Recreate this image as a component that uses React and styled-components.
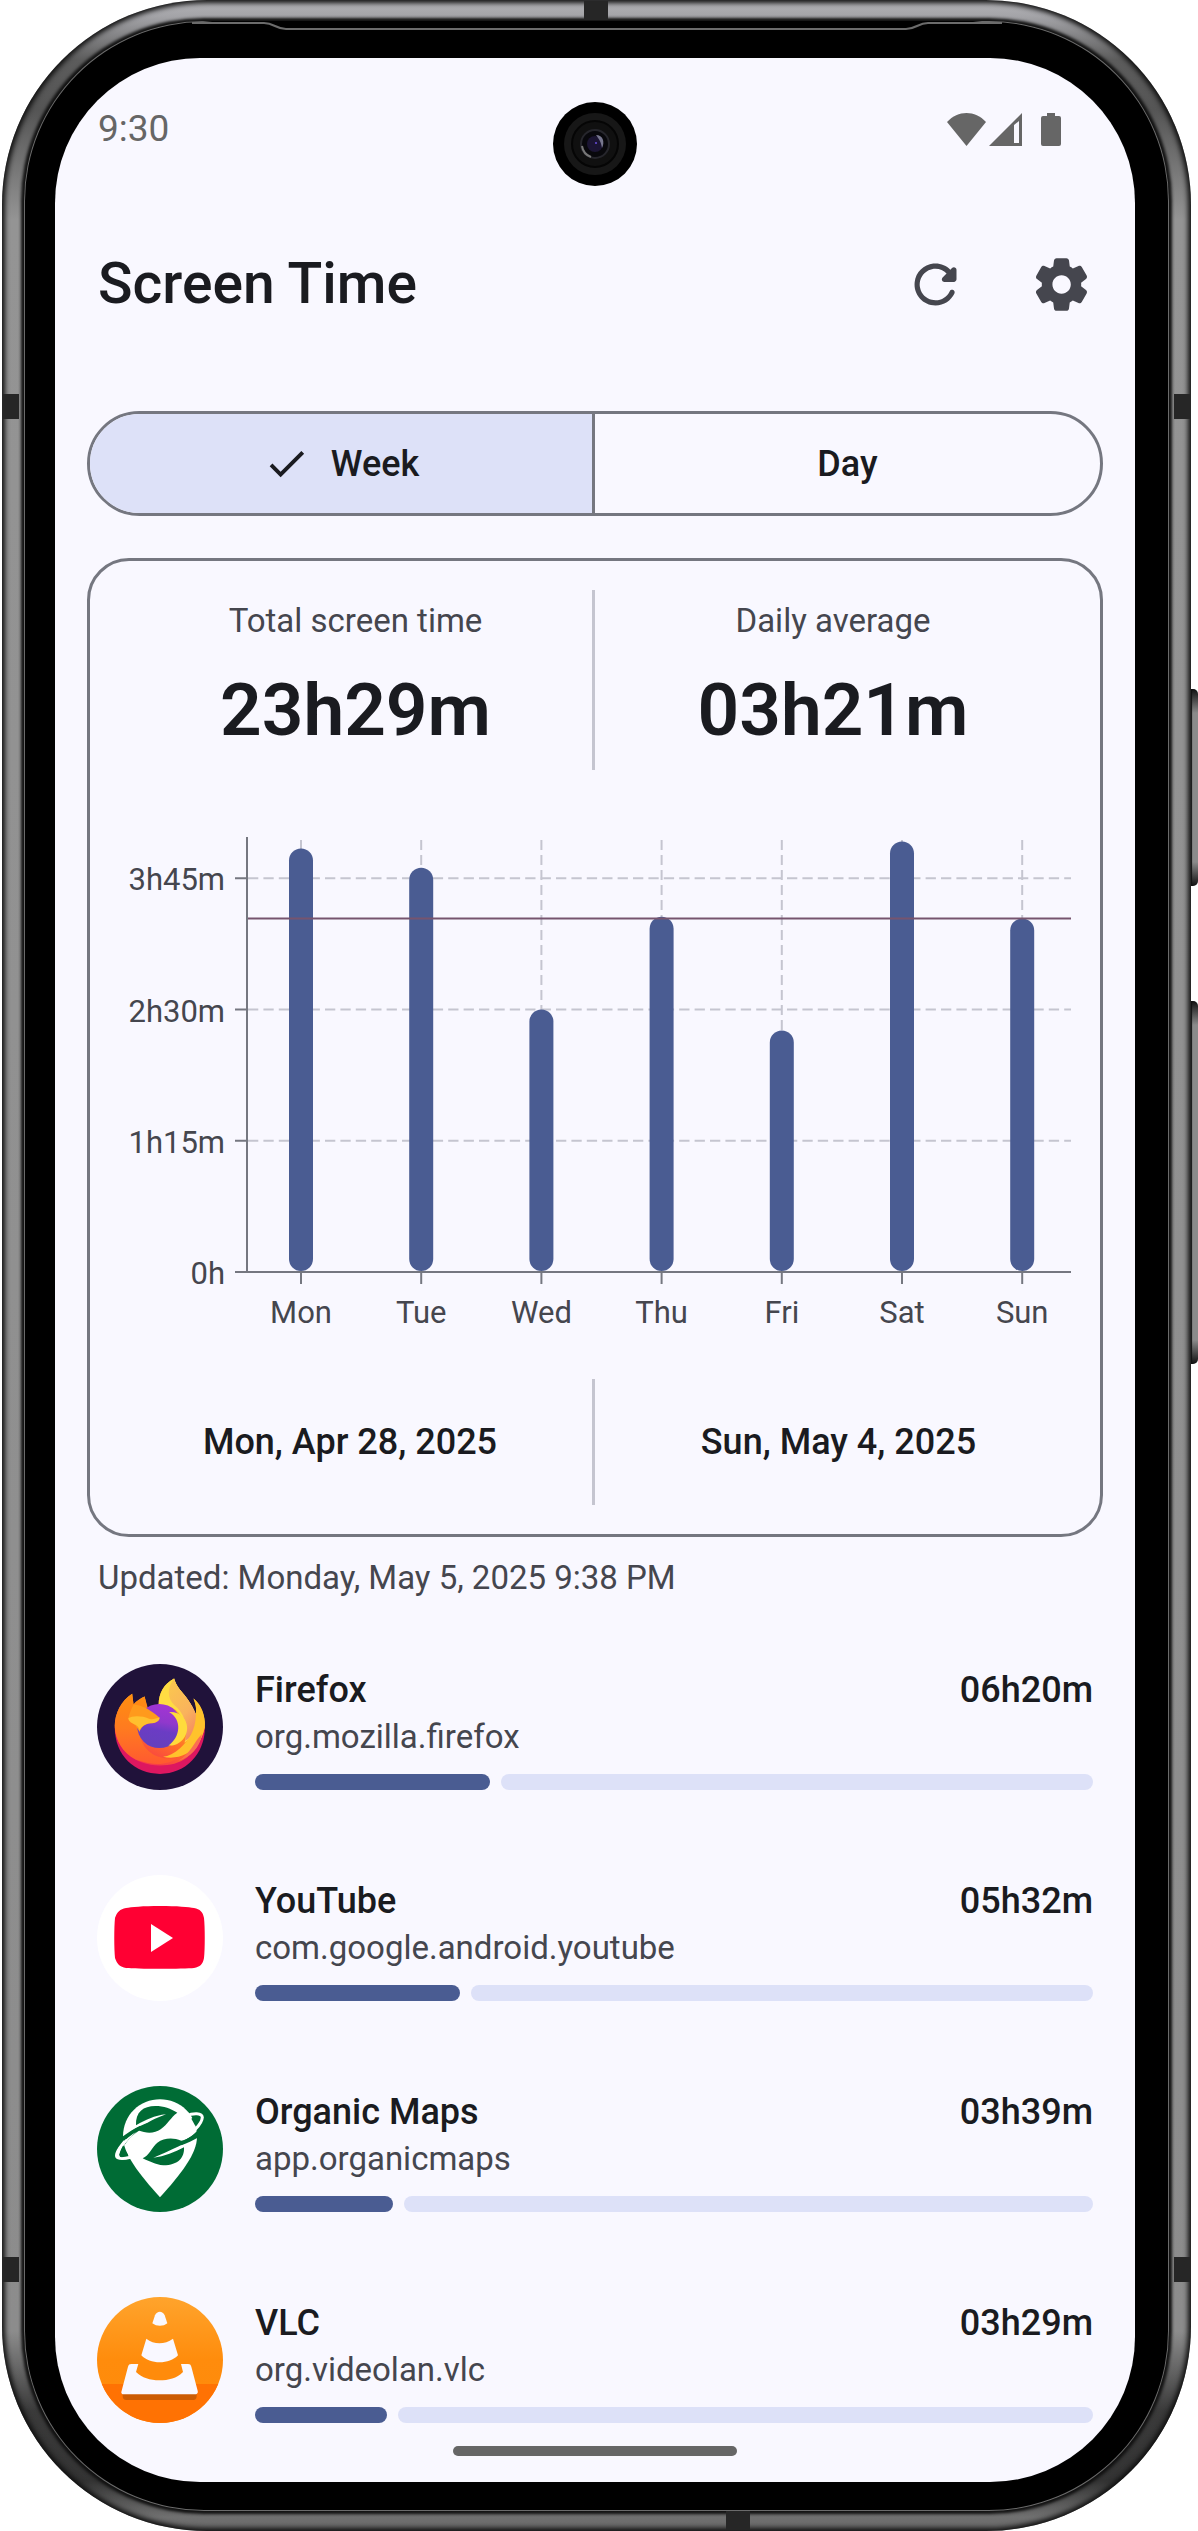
import React, { useState } from 'react'
import styled, { createGlobalStyle } from 'styled-components'

const color = {
  surface: '#f9f8ff',
  text: '#1a1b20',
  textMuted: '#45464e',
  outline: '#757780',
  outlineLight: '#c5c5d0',
  primary: '#4a5c92',
  container: '#dde1f8',
  average: '#76546e',
  status: '#666666',
}

const GlobalStyle = createGlobalStyle`
  * {
    box-sizing: border-box;
  }

  body {
    margin: 0;
    background-color: white;
    color: ${color.text};
    font-family: Roboto, sans-serif;
  }
`

/* phone body */

const Device = styled.div`
  position: relative;
  margin: 0 7px 0 2px;
  padding: 21px 22px 20px;
  border-radius: 205px;
  background: linear-gradient(
    to bottom,
    #b4b4b8 0,
    #a4a4a8 16px,
    #5c5c5c 60px,
    #555555 110px,
    #949494 220px,
    #8c8c8c calc(100% - 200px),
    #3a3a3a calc(100% - 120px),
    #333333 calc(100% - 50px),
    #707070 calc(100% - 14px),
    #686868 100%
  );
  box-shadow: inset 0 0 5px 3px #111111;
`

const Band = styled.span`
  position: absolute;
  background-color: #262626;
`

const SideBand = styled(Band)`
  ${({ $side }) => $side}: 1px;
  ${({ $from }) => $from};
  width: 16px;
  height: 25px;
`

const EndBand = styled(Band)`
  ${({ $edge }) => $edge}: 1px;
  left: ${({ $left }) => $left};
  width: 24px;
  height: 19px;
`

const SideButton = styled.span`
  position: absolute;
  right: -7px;
  top: ${({ $top }) => $top}px;
  width: 7px;
  height: ${({ $height }) => $height}px;
  border-radius: 0 5px 5px 0;
  background: linear-gradient(to bottom, #111111 0, #8b8b8b 24px, #8b8b8b calc(100% - 24px), #111111 100%);
  box-shadow: inset 1px 0 1px #111111;
`

const Bezel = styled.div`
  padding: 37px 34px 29px 31px;
  border-radius: 180px;
  background-color: black;
  box-shadow: 0 0 3px 3px #111111, inset 0 0 0 1px #6b6b6b;
`

const Earpiece = styled.svg`
  position: absolute;
  top: 21px;
  left: 0;
  width: 100%;
  height: 12px;
`

const Screen = styled.div`
  position: relative;
  display: flex;
  flex-direction: column;
  border-radius: 145px;
  background-color: ${color.surface};
`

const Camera = styled.svg`
  position: absolute;
  top: 44px;
  left: calc(50% - 42px);
  width: 84px;
  height: 84px;
`

/* app */

const StatusBar = styled.div`
  display: flex;
  align-items: center;
  justify-content: space-between;
  height: 142px;
  padding: 0 74px 0 43px;
  font-size: 37px;
  line-height: 42px;
  color: ${color.status};
`

const StatusIcons = styled.svg`
  width: 114px;
  height: 33px;
`

const AppBar = styled.header`
  display: flex;
  align-items: center;
  height: 168px;
  padding: 0 11px 0 43px;
`

const Title = styled.h1`
  flex: 1;
  margin: 0;
  font-size: 57px;
  font-weight: 500;
  line-height: 74px;
`

const IconButton = styled.button`
  display: flex;
  align-items: center;
  justify-content: center;
  width: 126px;
  height: 126px;
  padding: 0;
  border: none;
  background: none;
  color: ${color.textMuted};

  svg {
    width: 63px;
    height: 63px;
    fill: currentColor;
  }
`

const Main = styled.main`
  display: flex;
  flex-direction: column;
  padding: 43px 32px 0;
`

const Segmented = styled.div`
  display: grid;
  grid-template-columns: 1fr 1fr;
  height: 105px;
  border: 3px solid ${color.outline};
  border-radius: 53px;
  overflow: hidden;
`

const Segment = styled.button`
  display: flex;
  align-items: center;
  justify-content: center;
  gap: 21px;
  padding: 0;
  border: none;
  background-color: ${({ $active }) => ($active ? color.container : 'transparent')};
  font-family: inherit;
  font-size: 36px;
  font-weight: 500;
  color: ${color.text};

  &:first-child {
    border-right: 3px solid ${color.outline};
  }

  svg {
    width: 47px;
    height: 47px;
  }
`

const Card = styled.section`
  margin-top: 42px;
  padding: 29px 0;
  border: 3px solid ${color.outline};
  border-radius: 42px;
`

const Split = styled.div`
  display: grid;
  grid-template-columns: 1fr 1fr;
  padding: 0 ${({ $inset }) => $inset}px;
`

const Stat = styled.div`
  padding: 10px 0 13px;
  text-align: center;

  &:first-child {
    border-right: 3px solid ${color.outlineLight};
  }
`

const Caption = styled.p`
  margin: 0;
  font-size: 33px;
  line-height: 42px;
  color: ${color.textMuted};
`

const StatValue = styled.p`
  margin: 21px 0 0;
  font-size: 73px;
  font-weight: 600;
  line-height: 94px;
`

const DateCell = styled.div`
  padding: 37px 0;
  font-size: 36px;
  font-weight: 500;
  line-height: 52px;
  text-align: center;

  &:first-child {
    border-right: 3px solid ${color.outlineLight};
  }
`

const ChartBox = styled.div`
  padding: 50px 29px 42px;
`

const ChartSvg = styled.svg`
  display: block;
  width: 100%;
  height: auto;
  overflow: visible;

  text {
    font-size: 31px;
    fill: ${color.textMuted};
  }
`

const Updated = styled(Caption)`
  margin: 20px 11px 0;
`

const AppList = styled.ul`
  display: flex;
  flex-direction: column;
  gap: 85px;
  margin: 65px 10px 0;
  padding: 0;
  list-style: none;
`

const AppRow = styled.li`
  display: flex;
  gap: 32px;
  height: 126px;
`

const AppIcon = styled.svg`
  flex: none;
  width: 126px;
  height: 126px;
`

const AppBody = styled.div`
  flex: 1;
  display: flex;
  flex-direction: column;
`

const AppLine = styled.div`
  display: flex;
  justify-content: space-between;
  font-size: 36px;
  font-weight: 500;
  line-height: 52px;
`

const Usage = styled.div`
  display: flex;
  gap: 11px;
  height: 16px;
  margin-top: auto;
`

const UsageFill = styled.span`
  border-radius: 8px;
  background-color: ${color.primary};
`

const UsageTrack = styled.span`
  flex: 1;
  border-radius: 8px;
  background-color: ${color.container};
`

const Handle = styled.div`
  width: 284px;
  height: 10px;
  margin: 23px auto 26px;
  border-radius: 5px;
  background-color: ${color.status};
`

/* app logos */

const FirefoxIcon = () => (
  <AppIcon viewBox="53 73 376 376" aria-hidden="true">
    <defs>
      <linearGradient id="ffBody" x1="0.75" y1="0.1" x2="0.3" y2="1">
        <stop offset="0" stopColor="#ffd93b" />
        <stop offset="0.35" stopColor="#ffa11e" />
        <stop offset="0.65" stopColor="#ff6a2a" />
        <stop offset="1" stopColor="#f5314f" />
      </linearGradient>
      <linearGradient id="ffFace" x1="0" y1="0" x2="0" y2="1">
        <stop offset="0" stopColor="#ff8f10" />
        <stop offset="0.5" stopColor="#ff7a20" />
        <stop offset="1" stopColor="#ff5a30" />
      </linearGradient>
      <linearGradient id="ffTail" x1="0.2" y1="0" x2="0.7" y2="1">
        <stop offset="0" stopColor="#fbc64f" />
        <stop offset="0.6" stopColor="#f9b35c" />
        <stop offset="1" stopColor="#f58a62" />
      </linearGradient>
      <linearGradient id="ffGlobe" x1="0.6" y1="0" x2="0.4" y2="1">
        <stop offset="0" stopColor="#a434d4" />
        <stop offset="0.4" stopColor="#9038cc" />
        <stop offset="0.6" stopColor="#6b3cc4" />
        <stop offset="1" stopColor="#6540bc" />
      </linearGradient>
    </defs>
    <circle cx="241" cy="261" r="188" fill="#20123a" />
    <path d="M106 262C106 347 166 401 241 401C317 401 375 342 375 262L350 240L120 240Z" fill="#dd1760" />
    <path
      d="M158 162C126 182 106 220 106 258C108 325 165 376 241 376C300 376 352 350 375 262C376 226 362 195 341 176C349 196 350 210 348 224C334 188 316 168 302 151C290 136 286 126 283 116C253 132 237 160 237 194L203 206L195 170C183 175 170 184 162 194Z"
      fill="url(#ffBody)"
    />
    <path
      d="M158 162C126 182 106 220 106 258C107 300 130 338 168 358C230 380 265 372 290 355C230 362 180 330 180 268L205 206L195 170C183 175 170 184 162 194Z"
      fill="url(#ffFace)"
    />
    <path
      d="M283 116C253 132 237 160 237 194C282 198 304 216 312 250C322 274 320 290 314 308C342 290 356 252 348 222C334 188 316 168 302 151C290 136 286 126 283 116Z"
      fill="#ffdc42"
    />
    <path
      d="M283 116C262 142 262 176 284 196C312 218 326 254 316 302C342 290 356 252 348 222C334 188 316 168 302 151C290 136 286 126 283 116Z"
      fill="url(#ffTail)"
    />
    <path
      d="M341 176C349 196 350 210 348 228C346 270 328 300 300 325C284 340 266 348 250 350C292 360 332 340 348 318C370 294 376 262 375 246C373 216 360 190 341 176Z"
      fill="#ffc22c"
    />
    <path d="M366 282C362 322 330 352 296 362C332 340 340 310 366 282Z" fill="#fb6e51" />
    <circle cx="239" cy="258" r="66" fill="url(#ffGlobe)" />
    <path d="M268 216C300 214 322 236 322 264C321 286 312 300 292 312C278 318 272 316 266 316C302 292 308 238 268 216Z" fill="#ffdb3c" />
    <path
      d="M162 194C190 196 212 210 238 232C242 240 230 248 212 250C196 252 184 262 180 276C172 258 156 244 146 236C150 220 156 206 162 194Z"
      fill="#ff9a1c"
    />
    <path
      d="M146 236C158 226 190 228 206 236C216 240 230 236 240 232C240 244 228 250 212 250C196 252 186 260 180 270C176 250 152 256 146 236Z"
      fill="#ffc02e"
    />
  </AppIcon>
)

const YouTubeIcon = () => (
  <AppIcon viewBox="0 0 126 126" aria-hidden="true">
    <circle cx="63" cy="63" r="63" fill="white" />
    <path
      d="M63 31C80 31 92 32 97 33C103 34 106 37 107 43C108 52 108 74 107 83C106 89 103 92 97 93C88 94 38 94 29 93C23 92 20 89 18 83C17 74 17 52 18 43C20 37 23 34 29 33C34 32 46 31 63 31Z"
      fill="#ff0033"
    />
    <path d="M54 49V77L76 63Z" fill="white" />
  </AppIcon>
)

const OrganicMapsIcon = () => (
  <AppIcon viewBox="51 78 378 378" aria-hidden="true">
    <circle cx="240" cy="267" r="189" fill="#006c35" />
    <path d="M129 230C129 164 180 118 240 118C300 118 351 164 351 230C351 282 302 342 240 412C178 342 129 282 129 230Z" fill="white" />
    <path d="M125 232C150 212 180 196 205 188L180 210C160 222 146 236 134 254Z" fill="#006c35" />
    <path d="M302 242C326 238 340 226 356 210L356 232C342 240 322 250 304 256Z" fill="#006c35" />
    <path d="M168 216C144 230 108 262 108 286C112 300 134 300 156 294C134 294 118 296 118 284C122 262 140 244 168 216Z" fill="white" />
    <path d="M140 238C122 258 106 278 110 290C114 298 134 296 152 292" fill="none" stroke="white" strokeWidth="9" />
    <path d="M128 258L118 284C122 290 136 288 144 284Z" fill="#006c35" />
    <path d="M318 168C340 158 366 158 367 172C366 192 334 224 300 244" fill="none" stroke="white" strokeWidth="9" />
    <path d="M334 176C346 168 358 168 358 174C358 182 350 192 346 198Z" fill="#006c35" />
    <path
      d="M168 196C166 156 190 138 226 138C252 138 272 146 292 158C272 172 264 192 242 208C224 220 202 222 174 211C200 186 228 174 258 163C224 166 196 180 168 196Z"
      fill="#006c35"
    />
    <path d="M128 236C146 218 164 206 180 198L186 204C166 214 148 226 132 242Z" fill="#006c35" />
    <path
      d="M188 295C208 286 214 264 232 248C252 234 278 232 304 242C328 236 340 224 352 212L352 228C326 246 270 272 220 293C254 290 284 276 312 262C314 292 296 316 250 316C226 314 208 304 188 295Z"
      fill="#006c35"
    />
  </AppIcon>
)

const VlcIcon = () => (
  <AppIcon viewBox="51 711 378 378" aria-hidden="true">
    <defs>
      <linearGradient id="vlcBg" x1="0" y1="0" x2="0" y2="1">
        <stop offset="0" stopColor="#ffa42c" />
        <stop offset="0.5" stopColor="#ff8c0c" />
        <stop offset="1" stopColor="#ff8a0a" />
      </linearGradient>
      <clipPath id="vlcClip">
        <circle cx="240" cy="900" r="189" />
      </clipPath>
    </defs>
    <circle cx="240" cy="900" r="189" fill="url(#vlcBg)" />
    <rect x="51" y="972" width="378" height="120" fill="#ff7203" clipPath="url(#vlcClip)" />
    <path d="M128 1000H350V1008C350 1016 346 1020 340 1020H139C132 1020 128 1016 128 1008Z" fill="#cc5c04" />
    <path d="M154 912H324C330 912 332 914 334 920L353 992C355 1000 350 1003 344 1003H133C126 1003 122 1000 125 992L144 920C146 914 148 912 154 912Z" fill="#f9f8ff" />
    <path d="M176 908H302L309 936C290 955 266 961 238 961C210 961 186 953 168 936Z" fill="#ff8b0b" />
    <path d="M199 836C222 854 254 854 279 836L294 886C268 914 210 914 184 886Z" fill="#f9f8ff" />
    <path d="M217 790L225 766C231 752 248 752 254 766L262 790C250 800 230 800 217 790Z" fill="#f9f8ff" />
  </AppIcon>
)

const apps = [
  { name: 'Firefox', id: 'org.mozilla.firefox', time: '06h20m', share: 28, Icon: FirefoxIcon },
  { name: 'YouTube', id: 'com.google.android.youtube', time: '05h32m', share: 24.5, Icon: YouTubeIcon },
  { name: 'Organic Maps', id: 'app.organicmaps', time: '03h39m', share: 16.5, Icon: OrganicMapsIcon },
  { name: 'VLC', id: 'org.videolan.vlc', time: '03h29m', share: 15.8, Icon: VlcIcon },
]

/* chart, values in minutes */

const week = [
  { day: 'Mon', minutes: 242 },
  { day: 'Tue', minutes: 231 },
  { day: 'Wed', minutes: 150 },
  { day: 'Thu', minutes: 203 },
  { day: 'Fri', minutes: 138 },
  { day: 'Sat', minutes: 246 },
  { day: 'Sun', minutes: 202 },
]

const levels = [
  { label: '3h45m', minutes: 225 },
  { label: '2h30m', minutes: 150 },
  { label: '1h15m', minutes: 75 },
  { label: '0h', minutes: 0 },
]

const BASE = 452
const AXIS_X = 128
const RIGHT = 952
const AVERAGE = 202

const yOf = (minutes) => BASE - minutes * 1.75
const xOf = (index) => 182 + index * 120.2

const Chart = () => (
  <ChartBox>
    <ChartSvg viewBox="0 0 952 517" role="img" aria-label="Screen time per day">
      {levels.map(({ label, minutes }) => (
        <g key={label}>
          {minutes > 0 && (
            <line
              x1={AXIS_X + 1}
              x2={RIGHT}
              y1={yOf(minutes)}
              y2={yOf(minutes)}
              stroke={color.outlineLight}
              strokeWidth="2"
              strokeDasharray="10.3 5.1"
            />
          )}
          <line x1={AXIS_X - 12} x2={AXIS_X} y1={yOf(minutes)} y2={yOf(minutes)} stroke={color.outline} strokeWidth="2" />
          <text x="106" y={yOf(minutes) + 12} textAnchor="end">{label}</text>
        </g>
      ))}
      {week.map(({ day, minutes }, i) => (
        <g key={day}>
          <line x1={xOf(i)} x2={xOf(i)} y1="20" y2={BASE} stroke={color.outlineLight} strokeWidth="2" strokeDasharray="10 5" />
          <rect x={xOf(i) - 12} y={yOf(minutes)} width="24" height={BASE - 1 - yOf(minutes)} rx="12" fill={color.primary} />
          <line x1={xOf(i)} x2={xOf(i)} y1={BASE} y2={BASE + 12} stroke={color.outline} strokeWidth="2" />
          <text x={xOf(i)} y="503" textAnchor="middle">{day}</text>
        </g>
      ))}
      <line x1={AXIS_X} x2={AXIS_X} y1="17" y2={BASE} stroke={color.outline} strokeWidth="2" />
      <line x1={AXIS_X} x2={RIGHT} y1={BASE} y2={BASE} stroke={color.outline} strokeWidth="2" />
      <line x1={AXIS_X + 1} x2={RIGHT} y1={yOf(AVERAGE)} y2={yOf(AVERAGE)} stroke={color.average} strokeWidth="2" />
    </ChartSvg>
  </ChartBox>
)

const periods = ['Week', 'Day']

const App = () => {
  const [period, setPeriod] = useState('Week')

  return (
    <React.Fragment>
      <GlobalStyle />
      <Device>
        <SideButton $top={689} $height={197} />
        <SideButton $top={1001} $height={363} />
        <Bezel>
          <Earpiece viewBox="0 0 1189 12" preserveAspectRatio="none" aria-hidden="true">
            <path d="M200 0H980L908 8H284L200 0Z" fill="black" />
            <path d="M190 2H262C272 2 274 8 284 8H904C914 8 916 2 926 2H1000" fill="none" stroke="#6b6b6b" strokeWidth="2" />
          </Earpiece>
          <Screen>
            <Camera viewBox="0 0 84 84" aria-hidden="true">
              <circle cx="42" cy="42" r="42" fill="black" />
              <circle cx="42" cy="42" r="31" fill="#171717" />
              <circle cx="42" cy="42" r="23" fill="#101010" stroke="#050505" strokeWidth="2" />
              <circle cx="42" cy="42" r="14" fill="#08080c" stroke="#26262c" strokeWidth="2" />
              <path d="M29 44A14 14 0 0 0 38 55" fill="none" stroke="#777777" strokeWidth="2" />
              <circle cx="42" cy="42" r="8" fill="#1b1533" />
              <path d="M43 33C50 33 52 40 49 46C48 40 46 37 43 33Z" fill="#77778f" />
              <circle cx="43" cy="41" r="1" fill="#6a4fe0" />
            </Camera>
            <StatusBar>
              <span>9:30</span>
              <StatusIcons viewBox="0 0 114 33" fill="currentColor" aria-hidden="true">
                <path d="M0 9C11 -3 28 -3 39 9L19.5 33Z" />
                <path fillRule="evenodd" d="M42 33L75 0V33ZM67 12V30H72V8Z" />
                <path d="M94 5Q94 3 96 3H100V0H108V3H112Q114 3 114 5V31Q114 33 112 33H96Q94 33 94 31Z" />
              </StatusIcons>
            </StatusBar>
            <AppBar>
              <Title>Screen Time</Title>
              <IconButton type="button" aria-label="Refresh">
                <svg viewBox="0 0 24 24">
                  <path d="M17.65 6.35c-1.63-1.63-3.94-2.57-6.48-2.31-3.67.37-6.69 3.35-7.1 7.02C3.52 15.91 7.27 20 12 20c3.19 0 5.93-1.87 7.21-4.56.32-.67-.16-1.44-.9-1.44-.37 0-.72.2-.88.53-1.13 2.43-3.84 3.97-6.8 3.31-2.22-.49-4.01-2.3-4.48-4.52C5.31 9.44 8.26 6 12 6c1.66 0 3.14.69 4.22 1.78l-1.51 1.51c-.63.63-.19 1.71.7 1.71H19c.55 0 1-.45 1-1V6.41c0-.89-1.08-1.34-1.71-.71l-.64.65z" />
                </svg>
              </IconButton>
              <IconButton type="button" aria-label="Settings">
                <svg viewBox="0 0 24 24">
                  <path d="M19.5 12c0-.23-.01-.45-.03-.68l1.86-1.41c.4-.3.51-.86.26-1.3l-1.87-3.23c-.25-.44-.79-.62-1.25-.42l-2.15.91c-.37-.26-.76-.49-1.17-.68l-.29-2.31C14.8 2.38 14.37 2 13.87 2h-3.73c-.51 0-.94.38-1 .88l-.29 2.31c-.41.19-.8.42-1.17.68l-2.15-.91c-.46-.2-1-.02-1.25.42L2.41 8.62c-.25.44-.14.99.26 1.3l1.86 1.41C4.51 11.55 4.5 11.77 4.5 12s.01.45.03.68l-1.86 1.41c-.4.3-.51.86-.26 1.3l1.87 3.23c.25.44.79.62 1.25.42l2.15-.91c.37.26.76.49 1.17.68l.29 2.31c.06.5.49.88.99.88h3.73c.5 0 .93-.38.99-.88l.29-2.31c.41-.19.8-.42 1.17-.68l2.15.91c.46.2 1 .02 1.25-.42l1.87-3.23c.25-.44.14-.99-.26-1.3l-1.86-1.41C19.49 12.45 19.5 12.23 19.5 12zM12.04 15.5c-1.93 0-3.5-1.57-3.5-3.5s1.57-3.5 3.5-3.5 3.5 1.57 3.5 3.5-1.57 3.5-3.5 3.5z" />
                </svg>
              </IconButton>
            </AppBar>
            <Main>
              <Segmented>
                {periods.map((name) => (
                  <Segment
                    key={name}
                    type="button"
                    $active={period === name}
                    aria-pressed={period === name}
                    onClick={() => setPeriod(name)}
                  >
                    {period === name && (
                      <svg viewBox="0 0 24 24" fill="currentColor" aria-hidden="true">
                        <path d="M9 16.17L4.83 12l-1.42 1.41L9 19 21 7l-1.41-1.41z" />
                      </svg>
                    )}
                    {name}
                  </Segment>
                ))}
              </Segmented>
              <Card>
                <Split $inset={29}>
                  <Stat>
                    <Caption>Total screen time</Caption>
                    <StatValue>23h29m</StatValue>
                  </Stat>
                  <Stat>
                    <Caption>Daily average</Caption>
                    <StatValue>03h21m</StatValue>
                  </Stat>
                </Split>
                <Chart />
                <Split $inset={18}>
                  <DateCell>Mon, Apr 28, 2025</DateCell>
                  <DateCell>Sun, May 4, 2025</DateCell>
                </Split>
              </Card>
              <Updated>Updated: Monday, May 5, 2025 9:38 PM</Updated>
              <AppList>
                {apps.map(({ name, id, time, share, Icon }) => (
                  <AppRow key={id}>
                    <Icon />
                    <AppBody>
                      <AppLine>
                        <span>{name}</span>
                        <span>{time}</span>
                      </AppLine>
                      <Caption>{id}</Caption>
                      <Usage role="progressbar" aria-label={name} aria-valuenow={share} aria-valuemin={0} aria-valuemax={100}>
                        <UsageFill style={{ width: `${share}%` }} />
                        <UsageTrack />
                      </Usage>
                    </AppBody>
                  </AppRow>
                ))}
              </AppList>
            </Main>
            <Handle />
          </Screen>
        </Bezel>
        <SideBand $side="left" $from="top: 394px" />
        <SideBand $side="right" $from="top: 394px" />
        <SideBand $side="left" $from="bottom: 249px" />
        <SideBand $side="right" $from="bottom: 249px" />
        <EndBand $edge="top" $left="calc(50% - 13px)" />
        <EndBand $edge="bottom" $left="calc(50% + 129px)" />
      </Device>
    </React.Fragment>
  )
}

export default App
